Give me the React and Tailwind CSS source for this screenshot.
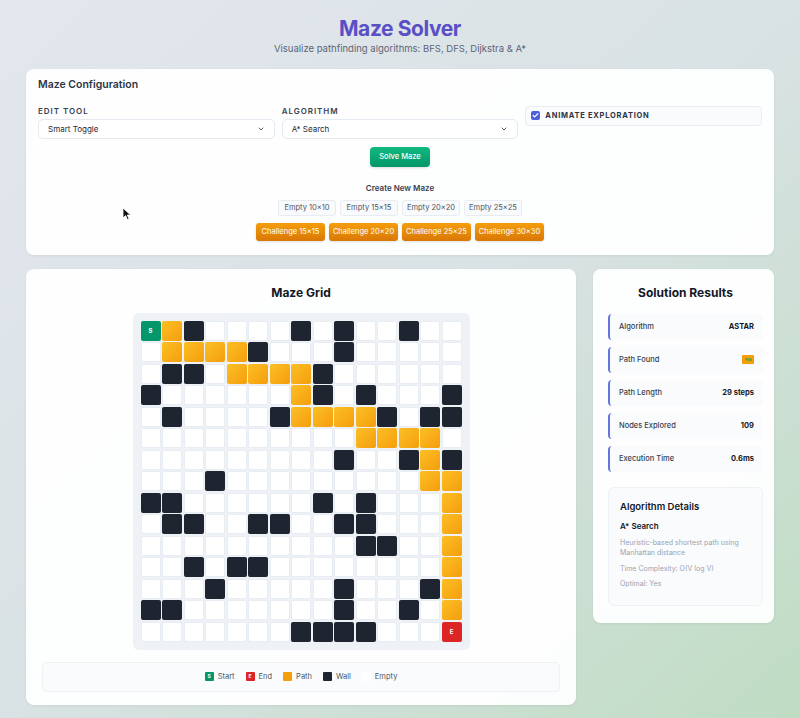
import React from 'react';

// 0 empty, 1 wall, 2 path, 3 start, 4 end
const MAZE = [
  '321000010100100',
  '022221000100000',
  '011022221000000',
  '100000021010001',
  '010000122221011',
  '000000000022220',
  '000000000100121',
  '000100000000022',
  '110000001010002',
  '011001100110002',
  '000000000011002',
  '001011000000002',
  '000100000100012',
  '110000000100102',
  '000000011110004',
];

const cellClass = {
  0: 'bg-white border border-[#e8edf3]',
  1: 'bg-[#1e2430]',
  2: 'bg-gradient-to-br from-[#fbbf24] to-[#f59e0b]',
  3: 'bg-[#059669] text-white',
  4: 'bg-[#dc2626] text-white',
};

const RESULTS = [
  ['Algorithm', 'ASTAR'],
  ['Path Found', null],
  ['Path Length', '29 steps'],
  ['Nodes Explored', '109'],
  ['Execution Time', '0.6ms'],
];

function Select({ label, value }) {
  return (
    <div>
      <div className="text-[8px] font-semibold tracking-[0.12em] uppercase text-[#374151] mb-[4px] leading-none">{label}</div>
      <div className="h-[20px] flex items-center justify-between px-[9px] rounded-[5px] border border-[#e5e9f0] bg-white">
        <span className="text-[8px] text-[#1f2937]">{value}</span>
        <svg width="8" height="8" viewBox="0 0 24 24" fill="none" stroke="#374151" strokeWidth="2.5" strokeLinecap="round" strokeLinejoin="round">
          <path d="m6 9 6 6 6-6" />
        </svg>
      </div>
    </div>
  );
}

export default function App() {
  return (
    <div
      className="relative min-h-[718px] w-full bg-gradient-to-br from-[#e3e7ee] via-[#d9e2e4] to-[#bfdcc3] px-[26px] pt-[17px] pb-[13px] text-[#1f2937]"
      style={{ fontFamily: 'Inter, "Noto Sans", sans-serif' }}
    >
      {/* Header */}
      <h1 className="text-center text-[21px] font-bold leading-[24px] tracking-[-0.02em] text-[#5a4fc4]">Maze Solver</h1>
      <p className="text-center text-[9.5px] text-[#5b6477] leading-[10px] mt-[3px]">
        Visualize pathfinding algorithms: BFS, DFS, Dijkstra &amp; A*
      </p>

      {/* Config */}
      <div className="mt-[15px] bg-white/95 rounded-[8px] shadow-[0_1px_3px_rgba(0,0,0,0.06)] px-[12px] pt-[11px] pb-[14px]">
        <h2 className="text-[10.5px] font-semibold text-[#2d3545] leading-none">Maze Configuration</h2>
        <div className="grid grid-cols-3 gap-[7px] mt-[16px]">
          <Select label="Edit Tool" value="Smart Toggle" />
          <Select label="Algorithm" value="A* Search" />
          <div>
            <div className="-mt-[1px] h-[20px] flex items-center gap-[5px] px-[5px] rounded-[4px] border border-[#e9edf3] bg-[#fafbfd]">
              <span className="w-[9px] h-[9px] rounded-[2px] bg-[#4f5fdc] flex items-center justify-center">
                <svg width="7" height="7" viewBox="0 0 24 24" fill="none" stroke="white" strokeWidth="4" strokeLinecap="round" strokeLinejoin="round">
                  <path d="M20 6 9 17l-5-5" />
                </svg>
              </span>
              <span className="text-[7.5px] font-bold tracking-[0.1em] uppercase text-[#2d3545]">Animate Exploration</span>
            </div>
          </div>
        </div>

        <div className="flex justify-center mt-[8px]">
          <button className="h-[20px] px-[9px] rounded-[4px] bg-gradient-to-b from-[#10b981] to-[#059669] text-white text-[7.5px] font-medium shadow-sm">
            Solve Maze
          </button>
        </div>

        <div className="text-center text-[8px] font-semibold text-[#374151] mt-[17px] leading-none">Create New Maze</div>
        <div className="flex justify-center gap-[4px] mt-[8px]">
          {['Empty 10×10', 'Empty 15×15', 'Empty 20×20', 'Empty 25×25'].map((t) => (
            <button key={t} className="h-[16px] w-[58px] rounded-[3px] border border-[#e8ecf2] bg-[#f9fafc] text-[7.5px] text-[#4b5563]">
              {t}
            </button>
          ))}
        </div>
        <div className="flex justify-center gap-[4px] mt-[7px]">
          {['Challenge 15×15', 'Challenge 20×20', 'Challenge 25×25', 'Challenge 30×30'].map((t) => (
            <button key={t} className="h-[18px] w-[69px] rounded-[3px] bg-gradient-to-b from-[#f59e0b] to-[#d97706] text-[7.5px] text-white shadow-sm">
              {t}
            </button>
          ))}
        </div>
      </div>

      {/* Main */}
      <div className="flex gap-[17px] mt-[14px] items-start">
        <div className="w-[550px] bg-white/95 rounded-[8px] shadow-[0_1px_3px_rgba(0,0,0,0.06)] pt-[18px] pb-[13px] px-[16px]">
          <h2 className="text-center text-[12px] font-bold leading-none text-[#111827]">Maze Grid</h2>
          <div className="flex justify-center mt-[14px]">
            <div className="p-[8px] rounded-[6px] bg-[#eef1f6]">
              <div className="grid grid-cols-[repeat(15,20px)] gap-[1.5px]">
                {MAZE.flatMap((row, r) =>
                  row.split('').map((c, ci) => (
                    <div
                      key={`${r}-${ci}`}
                      className={`w-[20px] h-[20px] rounded-[2px] flex items-center justify-center text-[6px] font-bold ${cellClass[c]}`}
                    >
                      {c === '3' ? 'S' : c === '4' ? 'E' : ''}
                    </div>
                  ))
                )}
              </div>
            </div>
          </div>
          <div className="mt-[12px] h-[30px] rounded-[5px] border border-[#eef1f5] bg-[#fafbfc] flex items-center justify-center gap-[11px] text-[7.5px] text-[#4b5563]">
            <span className="flex items-center gap-[4px]">
              <span className="w-[9px] h-[9px] rounded-[1px] bg-[#059669] text-white text-[5px] font-bold flex items-center justify-center">S</span>Start
            </span>
            <span className="flex items-center gap-[4px]">
              <span className="w-[9px] h-[9px] rounded-[1px] bg-[#dc2626] text-white text-[5px] font-bold flex items-center justify-center">E</span>End
            </span>
            <span className="flex items-center gap-[4px]">
              <span className="w-[9px] h-[9px] rounded-[1px] bg-[#f59e0b]" />Path
            </span>
            <span className="flex items-center gap-[4px]">
              <span className="w-[9px] h-[9px] rounded-[1px] bg-[#1e2430]" />Wall
            </span>
            <span className="flex items-center gap-[4px]">
              <span className="w-[9px] h-[9px] rounded-[1px] bg-white" />Empty
            </span>
          </div>
        </div>

        <div className="flex-1 bg-white/95 rounded-[8px] shadow-[0_1px_3px_rgba(0,0,0,0.06)] pt-[18px] pb-[17px] pl-[15px] pr-[11px]">
          <h2 className="text-center text-[12px] font-bold leading-none text-[#111827]">Solution Results</h2>
          <div className="mt-[15px] flex flex-col gap-[7px]">
            {RESULTS.map(([k, v]) => (
              <div key={k} className="h-[26px] flex items-center justify-between pl-[9px] pr-[9px] rounded-[4px] border-l-[2px] border-[#6674e0] bg-[#fafbfd]">
                <span className="text-[7.5px] font-medium text-[#374151]">{k}</span>
                {v ? (
                  <span className="text-[7.5px] font-bold text-[#111827]">{v}</span>
                ) : (
                  <span className="w-[12px] h-[9px] rounded-[1px] bg-[#f59e0b] text-[4px] font-bold text-[#3f9a3a] flex items-center justify-center">Yes</span>
                )}
              </div>
            ))}
          </div>
          <div className="mt-[15px] rounded-[6px] border border-[#eef1f5] bg-[#fafbfc] px-[11px] pt-[14px] pb-[18px]">
            <h3 className="text-[9.5px] font-semibold leading-none text-[#111827]">Algorithm Details</h3>
            <div className="text-[8px] font-semibold mt-[11px] leading-none text-[#111827]">A* Search</div>
            <p className="text-[7px] text-[#9aa3b2] mt-[8px] leading-[10px]">Heuristic-based shortest path using Manhattan distance</p>
            <p className="text-[7px] text-[#9aa3b2] mt-[7px] leading-none">Time Complexity: O(V log V)</p>
            <p className="text-[7px] text-[#9aa3b2] mt-[8px] leading-none">Optimal: Yes</p>
          </div>
        </div>
      </div>

      {/* mouse pointer visible in the capture */}
      <svg className="absolute left-[122px] top-[207px]" width="10" height="14" viewBox="0 0 10 14">
        <path d="M1 1 L1 11 L3.6 8.6 L5.4 12.6 L7 11.9 L5.3 8 L8.6 8 Z" fill="#111" stroke="white" strokeWidth="0.8" />
      </svg>
    </div>
  );
}
